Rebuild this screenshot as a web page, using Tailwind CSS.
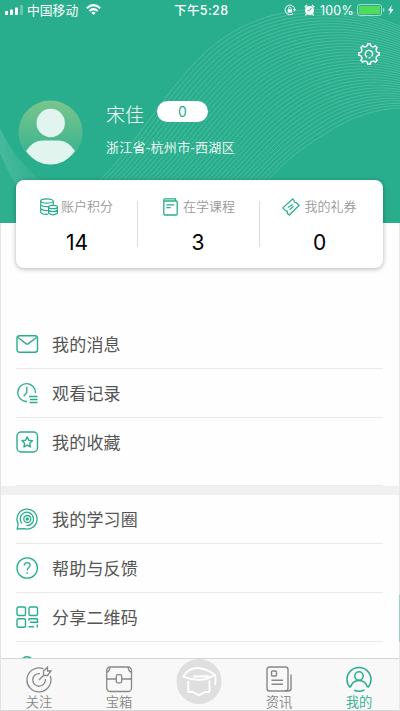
<!DOCTYPE html>
<html lang="zh-CN">
<head>
<meta charset="utf-8">
<title>我的</title>
<script src="https://cdn.jsdelivr.net/npm/@tailwindcss/browser@4"></script>
</head>
<body class="bg-white font-['Liberation_Sans','Noto_Sans_CJK_SC',sans-serif]">
<div class="relative w-[400px] h-[711px] overflow-hidden bg-[#fefefe] flex flex-col">
  <header class="relative h-[223px] shrink-0 bg-[#28ae8c] text-white">
    <svg class="absolute inset-0" width="400" height="223" fill="none" stroke="#fff">
      <g id="waves" stroke-width=".8" stroke-opacity=".22"></g>
      <path d="M0 128C8 150 24 167 40 181V223H0Z" fill="#fff" fill-opacity=".03" stroke="none"/>
      <g id="ripples" stroke-width=".7" stroke-opacity=".15"></g>
    </svg>
    <div class="relative h-5 flex items-center pl-[5px] pr-[5px] text-[13px]">
      <svg width="18" height="10" fill="#fff"><rect y="6" width="3" height="4" rx=".7"/><rect x="5" y="4.500" width="3" height="5.500" rx=".7"/><rect x="10" y="2.500" width="3" height="7.500" rx=".7"/><rect x="15" width="3" height="10" rx=".7" opacity=".3"/></svg>
      <span class="ml-[4px] pt-px w-[53px] text-[12.800px] leading-5 whitespace-nowrap">中国移动</span>
      <svg class="ml-[6px]" width="15" height="12" viewBox="0 0 15 12" fill="none" stroke="#fff" stroke-width="2"><path d="M.8 4.300Q7.500-2 14.200 4.300M3.400 7Q7.500 3.300 11.600 7"/><path d="M5.300 8.700Q7.500 7 9.700 8.700L7.500 11Z" fill="#fff" stroke="none"/></svg>
      <span class="absolute left-[174px] top-[.5px] text-[12.500px] leading-5 font-medium tracking-[.4px] whitespace-nowrap font-['Inter','Noto_Sans_CJK_SC',sans-serif]">下午5:28</span>
      <div class="ml-auto flex items-center">
        <svg width="12" height="12" viewBox="0 0 12 12" fill="none" stroke="#fff"><path d="M9.300 9.300A4.800 4.800 0 1 1 10.700 5.500"/><path d="M8.800 5.200h3.200L10.500 7.600Z" fill="#fff" stroke="none"/><rect x="3.700" y="5.300" width="4.200" height="3.300" fill="#fff" stroke="none"/><path d="M4.500 5.300V4.400a1.300 1.300 0 0 1 2.600 0v.9" stroke-width=".8"/></svg>
        <svg class="ml-[8px]" width="11" height="12" viewBox="0 0 11 12"><circle cx="5.500" cy="6.500" r="4.500" fill="#fff"/><path d="M.8 3.200 3 1M8 1l2.200 2.200M2.500 10 1.300 11.300M8.500 10l1.200 1.300" stroke="#fff" stroke-width="1.300"/><path d="M7.500 4 5.500 6.700H3.500" stroke="#28ae8c" fill="none"/></svg>
        <span class="ml-[5px] w-[35px] pt-px text-[12.500px] leading-5 tracking-[.2px] font-['Inter','Liberation_Sans',sans-serif]">100%</span>
        <svg class="ml-[2px]" width="38" height="12" viewBox="0 0 38 12"><rect x=".5" y=".5" width="24" height="11" rx="2.500" fill="none" stroke="#fff" stroke-opacity=".55"/><rect x="2" y="2" width="21" height="8" rx="1" fill="#4fdb5c"/><path d="M26 4v4q1.500-.5 1.500-2T26 4Z" fill="#fff" fill-opacity=".6"/><path d="M34.800 1 31 6.600h2.300L32.300 11 36.500 5.200H34Z" fill="#fff"/></svg>
      </div>
    </div>
    <svg class="absolute left-[358px] top-[43px]" width="22" height="22" viewBox="0 0 22 22" fill="none" stroke="#fff" stroke-width="1.400" stroke-linejoin="round"><path id="gear"/><path d="M9.200 14.300A3.700 3.700 0 1 1 13.700 13.500M10.700 14.700A3.700 3.700 0 0 0 12.500 14.300"/></svg>
    <div class="relative flex pt-[80px] pl-[18px]">
      <svg width="65" height="65" viewBox="0 0 65 65"><defs><linearGradient id="av" x2="0" y2="1"><stop stop-color="#7ac58d"/><stop offset="1" stop-color="#2eb190"/></linearGradient></defs><circle cx="32.500" cy="32.500" r="32" fill="url(#av)"/><g fill="#e1f4ee"><circle cx="32.700" cy="23" r="14.200"/><path d="M8 51Q15 40 25 40.500H40Q50 40 57 51Q47 64.500 32.500 64.500T8 51Z"/></g></svg>
      <div class="ml-[23px]">
        <div class="flex mt-px h-[26px]"><span class="pt-[2px] text-[19px] leading-[26px] font-light">宋佳</span><span class="ml-[13px] w-[51px] h-[21px] rounded-full bg-white text-[#28ae8c] text-[14px] leading-[21px] text-center font-['Inter','Liberation_Sans',sans-serif]">0</span></div>
        <div class="mt-[11px] text-[13px] leading-[20px] tracking-[.3px] font-[350] whitespace-nowrap">浙江省-杭州市-西湖区</div>
      </div>
    </div>
  </header>

  <section class="relative mx-4 w-[367px] h-[88px] -mt-[43px] shrink-0 bg-white rounded-[8px] shadow-[0_1px_5px_rgba(0,0,0,.3)] flex">
    <div class="w-[122px] pt-[17px] flex flex-col items-center">
      <div class="flex items-center h-[20px]">
        <svg width="18" height="18" viewBox="0 0 18 18" fill="none" stroke="#28ae8c" stroke-width="1.200"><ellipse cx="7" cy="3" rx="6.300" ry="2.200"/><path d="M.7 3v11.500Q2.500 16.800 8 16.400M13.300 3v4M.7 6.800Q3 9.200 9 8.600M.7 10.600Q3 13 8 12.500"/><ellipse cx="13" cy="9" rx="4.400" ry="1.700"/><path d="M8.600 9v6.300Q13 18.500 17.400 15.300V9M8.600 12.200Q13 15.200 17.400 12.200"/></svg>
        <span class="ml-[3px] mr-px text-[13px] leading-5 font-[350] text-[#999]">账户积分</span>
      </div>
      <b class="mt-[12px] text-[21px] leading-[28px] font-normal text-black font-['Inter','Liberation_Sans',sans-serif]">14</b>
    </div>
    <div class="w-px h-[46px] mt-[21px] -ml-px bg-[#ddd]"></div>
    <div class="w-[122px] pt-[17px] flex flex-col items-center">
      <div class="flex items-center h-[20px]">
        <svg width="15" height="18" viewBox="0 0 15 18" fill="none" stroke="#28ae8c" stroke-width="1.300"><rect x=".8" y="3" width="13.400" height="14" rx="1"/><path d="M.8 3.500V1.700Q.8.800 1.800.8H12.500V3M3.500 6.800h7.700M3.500 9.700h4.200"/></svg>
        <span class="ml-[5px] text-[13px] leading-5 font-[350] text-[#999]">在学课程</span>
      </div>
      <b class="mt-[12px] -ml-[2px] text-[21px] leading-[28px] font-normal text-black font-['Inter','Liberation_Sans',sans-serif]">3</b>
    </div>
    <div class="w-px h-[46px] mt-[21px] -ml-px bg-[#ddd]"></div>
    <div class="w-[120px] pt-[17px] flex flex-col items-center">
      <div class="flex items-center h-[20px]">
        <svg width="18" height="18" viewBox="0 0 18 18" fill="none" stroke="#28ae8c" stroke-width="1.200" stroke-linejoin="round"><path d="M.8 9.900 10.700 1 12.200 2.700Q12 4.600 14.200 4.700L17.200 7.300 7.300 17 5.200 15.200Q6.200 12.700 3.800 12.900L.8 9.900Z"/><path d="m5.800 9.600 4.900-3.200M7.600 11.800l3.900-3.500"/></svg>
        <span class="ml-[4px] mr-px text-[13px] leading-5 font-[350] text-[#999]">我的礼券</span>
      </div>
      <b class="mt-[12px] -ml-px text-[21px] leading-[28px] font-normal text-black font-['Inter','Liberation_Sans',sans-serif]">0</b>
    </div>
  </section>

  <main class="shrink-0 pt-[52px] text-[17px] tracking-[.2px] text-[#555] font-normal">
    <div class="mx-4 w-[367px]">
      <div class="h-[49px] border-b border-[#e8e8e8] flex items-center gap-[13px]">
        <svg width="23" height="22" viewBox="0 0 23 22" fill="none" stroke="#28ae8c" stroke-width="1.400"><rect x="1" y="2.700" width="20.500" height="16.500" rx="2.500"/><path d="m2 4.500 8 6.100q1.200.8 2.400 0L20.500 4.500"/></svg>
        <span class="pt-[3px]">我的消息</span></div>
      <div class="h-[49px] border-b border-[#e8e8e8] flex items-center gap-[13px]">
        <svg width="23" height="22" viewBox="0 0 23 22" fill="none" stroke="#28ae8c" stroke-width="1.300"><path d="M19.500 11A8.900 8.900 0 1 0 11 19.500M10.800 4.800v6L7.700 14M13 14.500h8.500M14 17.500h7.500M13.500 20.500h8"/></svg>
        <span class="pt-[3px]">观看记录</span></div>
      <div class="h-[49px] flex items-center gap-[13px]">
        <svg class="-mt-px" width="23" height="22" viewBox="0 0 23 22" fill="none" stroke="#28ae8c" stroke-width="1.400"><rect x="1" y="1" width="20.500" height="20" rx="4"/><path d="m11.200 5.900 1.600 3.300 3.600.5-2.600 2.600.6 3.600-3.200-1.700L8 15.900l.6-3.600L6 9.700l3.600-.5Z" stroke-linejoin="round"/></svg>
        <span class="pt-[2px]">我的收藏</span></div>
      <div class="h-[19px] border-b border-[#e9e9e9]"></div>
    </div>
    <div class="h-[9px] bg-[#f0f0f0]"></div>
    <div class="mx-4 w-[367px]">
      <div class="h-[49px] border-b border-[#e8e8e8] flex items-center gap-[13px]">
        <svg width="23" height="22" viewBox="0 0 23 22" fill="none" stroke="#28ae8c" stroke-width="1.300"><path d="M2.200 15.800A10 10 0 1 1 8.200 20.700L1.200 21Z" stroke-linejoin="round"/><path d="M6 15.500A6.700 6.700 0 1 1 10.500 17.600"/><circle cx="11.300" cy="11" r="3.500"/><circle cx="11.300" cy="11" r="1" fill="#28ae8c"/></svg>
        <span class="pt-[3px]">我的学习圈</span></div>
      <div class="h-[49px] border-b border-[#e8e8e8] flex items-center gap-[13px]">
        <svg width="23" height="22" viewBox="0 0 23 22" fill="none" stroke="#28ae8c" stroke-width="1.300"><circle cx="11.200" cy="11" r="10.200"/><path d="M8.300 8.500Q8.300 5.600 11.200 5.600T14.100 8.300Q14.100 9.600 12.500 10.700Q11.200 11.600 11.200 13.600"/><circle cx="11.200" cy="16" r=".6" fill="#28ae8c" stroke-width=".6"/></svg>
        <span class="pt-[3px]">帮助与反馈</span></div>
      <div class="h-[49px] border-b border-[#e8e8e8] flex items-center gap-[13px]">
        <svg width="23" height="22" viewBox="0 0 23 22" fill="none" stroke="#28ae8c" stroke-width="1.400"><rect x="1" y="1" width="8.500" height="8.500" rx="1.500"/><rect x="13" y="1" width="8.500" height="8.500" rx="1.500"/><rect x="1" y="12.700" width="8.500" height="8.500" rx="1.500"/><path d="M21.500 12.800H13M14 16.300h7.500v-3.500M12.500 20.800H18M21.300 18.500V21.500M13 12.200v2.500"/></svg>
        <span class="pt-[3px]">分享二维码</span></div>
      <div class="h-[49px] flex items-center gap-[13px]">
        <svg width="23" height="22" viewBox="0 0 23 22" fill="none" stroke="#28ae8c" stroke-width="1.400"><circle cx="11" cy="7" r="6.200"/><path d="M1 21q2-7 10-7t10 7"/></svg>
        <span class="pt-[2px]">推荐好友</span></div>
    </div>
  </main>

  <nav class="absolute left-0 top-[658px] w-[400px] h-[53px] bg-[#f8f8f8] border-t border-b border-[#d5d5d5] text-[#888] text-[13.300px] leading-[19px] font-[350] grid grid-cols-5">
    <div class="flex flex-col items-center pt-[7px] pr-[2px]">
      <svg width="28" height="27" viewBox="0 0 28 27" fill="none" stroke="#888" stroke-width="1.300"><path d="M18.500 2.800A12 12 0 1 0 25.300 10M15 7.700A6.300 6.300 0 1 0 20.300 13M14 14l5-5M18.500 9.500V5L22.500 1.200V5H26L22.500 9.500Z"/></svg>
      <span>关注</span></div>
    <div class="flex flex-col items-center pt-[7px] pr-[2px]">
      <svg width="28" height="27" viewBox="0 0 28 27" fill="none" stroke="#888" stroke-width="1.300"><rect x="1.700" y="1" width="24.800" height="24.500" rx="3.500"/><path d="M2 5Q3 8 5 1.500M26 5Q25 8 23 1.500M1.700 13H11M17 13h9.500"/><rect x="11.300" y="8.700" width="5.400" height="8.200" rx="1.500"/></svg>
      <span>宝箱</span></div>
    <div class="flex justify-center items-start pr-[2px]">
      <svg class="w-[38px] h-[46px] overflow-visible" viewBox="4 0 38 46" fill="none" stroke="#fff" stroke-width="1.900" stroke-linejoin="round"><circle cx="23" cy="22.500" r="18" fill="#dfdfdf" stroke="#dfdfdf" stroke-width="9"/><path d="M7 17.700Q13 8.500 22 9Q31 10 38.500 15.500Q32 21 23 21Q15 20.500 7 17.700ZM17 17.500 33 17.200M38.500 15.500Q40.500 18 39 26M12.300 22v11H17L23 36.300 29 33H33.500V21.500"/></svg></div>
    <div class="flex flex-col items-center pt-[7px] pr-[2px]">
      <svg width="28" height="27" viewBox="0 0 28 27" fill="none" stroke="#888" stroke-width="1.400"><rect x="2" y="1" width="21" height="24" rx="2.500"/><path d="M20 25h3.500Q26 25 26 22.500V8.500M6.500 14.300h11.500M6.500 18.200h11.500"/><rect x="6.500" y="5" width="5" height="5" rx="1"/></svg>
      <span>资讯</span></div>
    <div class="flex flex-col items-center pt-[7px] pr-[2px] text-[#28ae8c]">
      <svg width="28" height="27" viewBox="0 0 28 27" fill="none" stroke="#28ae8c" stroke-width="1.500"><path d="M5.200 21.600A12 12 0 1 1 22.800 21.600M19.500 23.800A12 12 0 0 1 9.200 24.200"/><circle cx="14" cy="10" r="4.200"/><path d="M5.500 21.300Q7.500 14.500 14 14.500T22.500 21.300"/></svg>
      <span>我的</span></div>
  </nav>
  <div class="absolute left-0 top-[223px] w-px h-[488px] bg-[#e2e2e2]"></div>
  <div class="absolute right-0 top-[223px] w-px h-[488px] bg-[#e8e8e8]"></div>
  <div class="absolute right-0 top-[595px] w-px h-[47px] bg-[#93d3c0]"></div>
</div>
<script>
  const NS = 'http://www.w3.org/2000/svg';
  // Interpolates between two curves of two cubic segments each and strokes the family of lines.
  function lines(id, a, b, n) {
    const g = document.getElementById(id);
    for (let i = 0; i <= n; i++) {
      const p = a.map((v, k) => (v + (b[k] - v) * i / n).toFixed(1));
      const e = document.createElementNS(NS, 'path');
      e.setAttribute('d', `M${p[0]} ${p[1]}C${p.slice(2).join(' ')}`);
      g.appendChild(e);
    }
  }
  lines('waves', [98, 182, 137, 145, 165, 89, 208, 50, 255, 8, 330, -5, 404, 28], [266, 182, 283, 163, 300, 149, 320, 137, 348, 118, 375, 108, 404, 108], 36);
  lines('ripples', [0, 128, 4, 138, 11, 149, 18, 158, 25, 167, 33, 175, 42, 182], [0, 152, 4, 162, 10, 174, 18, 188, 25, 201, 33, 212, 42, 223], 14);
  let d = '';
  for (let i = 0; i < 8; i++) {
    [[-.33, 8], [-.17, 8.7], [-.13, 10.3], [.13, 10.3], [.17, 8.7], [.33, 8]].forEach(([t, r]) => {
      const w = i * Math.PI / 4 + t;
      d += (d ? 'L' : 'M') + (11 + r * Math.sin(w)).toFixed(2) + ' ' + (11 - r * Math.cos(w)).toFixed(2);
    });
  }
  document.getElementById('gear').setAttribute('d', d + 'Z');
</script>
</body>
</html>
